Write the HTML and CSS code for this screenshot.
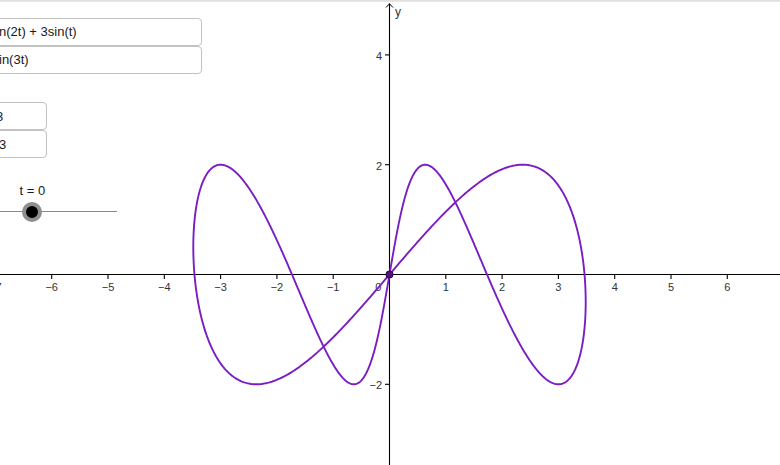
FILE: index.html
```html
<!DOCTYPE html>
<html>
<head>
<meta charset="utf-8">
<link rel="stylesheet" href="styles.css">
</head>
<body>
<div class="app">
  <div class="topbar"></div>
  <svg class="graph" width="780" height="463" viewBox="0 2 780 463">
    <g class="axis">
      <line x1="0" y1="274.5" x2="780" y2="274.5"/>
      <line x1="389.5" y1="3.5" x2="389.5" y2="465"/>
      <polyline class="arrow" points="386,7.5 389.5,3.8 393,7.5"/>
      <g class="ticks">
        <line x1="-4.6" y1="274.5" x2="-4.6" y2="279"/>
        <line x1="51.7" y1="274.5" x2="51.7" y2="279"/>
        <line x1="108" y1="274.5" x2="108" y2="279"/>
        <line x1="164.3" y1="274.5" x2="164.3" y2="279"/>
        <line x1="220.6" y1="274.5" x2="220.6" y2="279"/>
        <line x1="276.9" y1="274.5" x2="276.9" y2="279"/>
        <line x1="333.2" y1="274.5" x2="333.2" y2="279"/>
        <line x1="445.8" y1="274.5" x2="445.8" y2="279"/>
        <line x1="502.1" y1="274.5" x2="502.1" y2="279"/>
        <line x1="558.4" y1="274.5" x2="558.4" y2="279"/>
        <line x1="614.7" y1="274.5" x2="614.7" y2="279"/>
        <line x1="671" y1="274.5" x2="671" y2="279"/>
        <line x1="727.3" y1="274.5" x2="727.3" y2="279"/>
        <line x1="385" y1="54.9" x2="389.5" y2="54.9"/>
        <line x1="385" y1="164.7" x2="389.5" y2="164.7"/>
        <line x1="385" y1="384.3" x2="389.5" y2="384.3"/>
      </g>
    </g>
    <g class="labels">
      <text x="-4.6" y="291" text-anchor="middle">−7</text>
      <text x="51.7" y="291" text-anchor="middle">−6</text>
      <text x="108" y="291" text-anchor="middle">−5</text>
      <text x="164.3" y="291" text-anchor="middle">−4</text>
      <text x="220.6" y="291" text-anchor="middle">−3</text>
      <text x="276.9" y="291" text-anchor="middle">−2</text>
      <text x="333.2" y="291" text-anchor="middle">−1</text>
      <text x="378.4" y="291" text-anchor="middle">0</text>
      <text x="445.8" y="291" text-anchor="middle">1</text>
      <text x="502.1" y="291" text-anchor="middle">2</text>
      <text x="558.4" y="291" text-anchor="middle">3</text>
      <text x="614.7" y="291" text-anchor="middle">4</text>
      <text x="671" y="291" text-anchor="middle">5</text>
      <text x="727.3" y="291" text-anchor="middle">6</text>
      <text x="382" y="59.9" text-anchor="end">4</text>
      <text x="382" y="169.7" text-anchor="end">2</text>
      <text x="382" y="389.3" text-anchor="end">−2</text>
      <text class="axis-name" x="395" y="16">y</text>
    </g>
    <path id="curve" class="curve" d=""/>
    <circle class="dot" cx="389.5" cy="274.5" r="3.6"/>
  </svg>

  <div class="panel">
    <div class="group wide">
      <div class="field"><span>n(2t) + 3sin(t)</span></div>
      <div class="field"><span>in(3t)</span></div>
    </div>
    <div class="group narrow">
      <div class="field"><span class="shift">3</span></div>
      <div class="field"><span>3</span></div>
    </div>
    <div class="slider">
      <div class="slider-label">t = 0</div>
      <div class="track"><div class="knob"></div></div>
    </div>
  </div>
</div>
<script src="script.js"></script>
</body>
</html>
```

FILE: styles.css
```css
html, body {
  margin: 0;
  padding: 0;
  background: #ffffff;
  overflow: hidden;
}

body {
  width: 780px;
  height: 465px;
  font-family: "Liberation Sans", Arial, sans-serif;
}

.app {
  position: relative;
  width: 780px;
  height: 465px;
  overflow: hidden;
  display: flex;
  flex-direction: column;
}

.topbar {
  height: 2px;
  background: linear-gradient(#dcdcdc, #ececec);
  flex: none;
}

.graph {
  display: block;
  flex: none;
}

.axis line,
.axis polyline {
  stroke: #000;
  stroke-width: 1.1;
  fill: none;
}

.axis .arrow {
  stroke-width: 1;
}

.labels text {
  font-family: "Liberation Sans", Arial, sans-serif;
  font-size: 11px;
  fill: #333;
}

.labels .axis-name {
  font-size: 12px;
  fill: #333;
}

.curve {
  fill: none;
  stroke: #7a1dc2;
  stroke-width: 1.9;
  stroke-linejoin: round;
}

.dot {
  fill: #50177a;
  stroke: #2a0a40;
  stroke-width: 1;
}

.panel {
  position: absolute;
  top: 0;
  left: -12px;
  padding-top: 17.5px;
  display: flex;
  flex-direction: column;
}

.group {
  display: flex;
  flex-direction: column;
}

.wide { width: 214px; }

.narrow {
  width: 59px;
  margin-top: 28.5px;
}

.field {
  height: 28px;
  box-sizing: border-box;
  border: 1px solid #c2c2c2;
  border-radius: 4px;
  background: #fff;
  display: flex;
  align-items: center;
  padding-left: 10px;
  font-size: 13px;
  color: #1a1a1a;
  white-space: nowrap;
  overflow: hidden;
}

.field .shift {
  margin-left: -3px;
}

.slider {
  width: 129px;
  margin-top: 25.2px;
  display: flex;
  flex-direction: column;
}

.slider-label {
  width: 88.6px;
  text-align: center;
  font-size: 13px;
  line-height: 15px;
  color: #1a1a1a;
}

.track {
  position: relative;
  margin-top: 13.3px;
  height: 1px;
  background: #8a8a8a;
}

.knob {
  position: absolute;
  left: 34.3px;
  top: -9.5px;
  width: 20px;
  height: 20px;
  box-sizing: border-box;
  border-radius: 50%;
  background: #000;
  border: 4px solid #8f8f8f;
}
```

FILE: script.js
```js
(function () {
  var ox = 389.5, oy = 274.5, ux = 56.3, uy = 54.9;
  var n = 1200, d = '';
  for (var i = 0; i <= n; i++) {
    var t = 2 * Math.PI * i / n;
    var x = Math.sin(2 * t) + 3 * Math.sin(t);
    var y = 2 * Math.sin(3 * t);
    d += (i ? 'L' : 'M') + (ox + ux * x).toFixed(2) + ' ' + (oy - uy * y).toFixed(2);
  }
  document.getElementById('curve').setAttribute('d', d + 'Z');
})();
```
